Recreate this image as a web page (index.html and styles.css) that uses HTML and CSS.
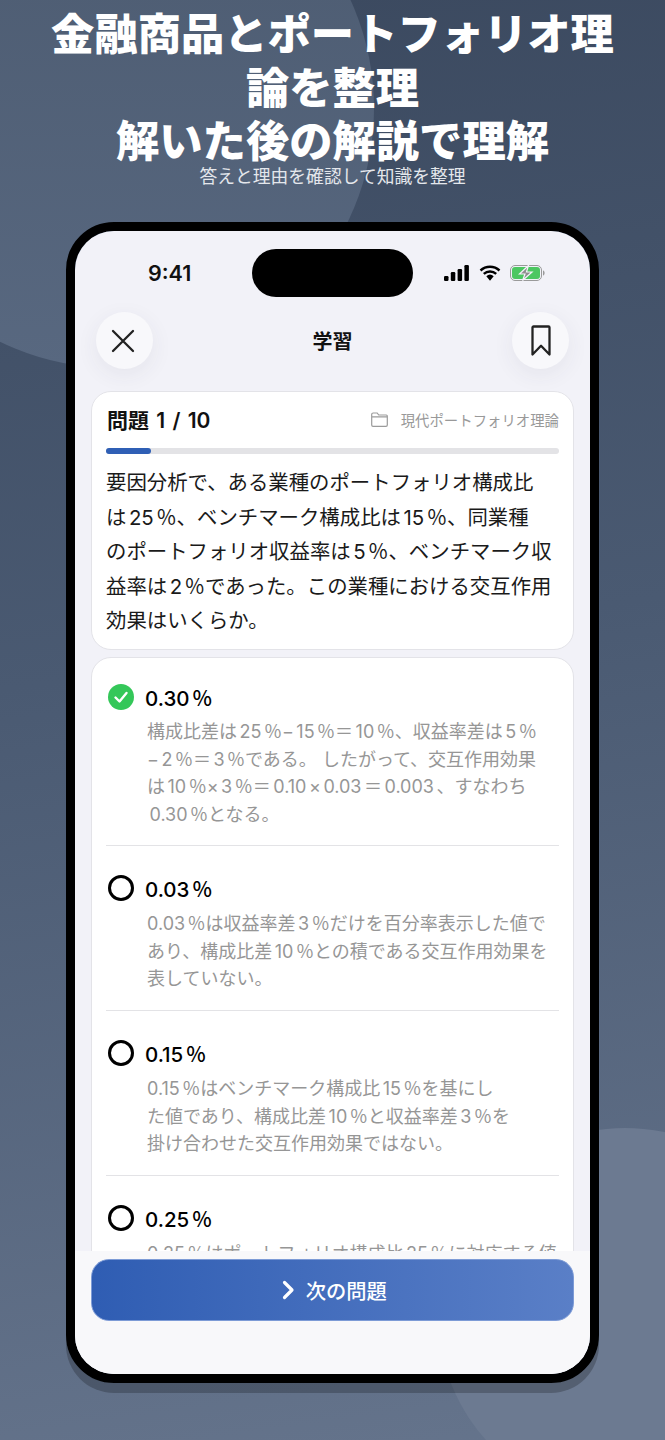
FILE: index.html
```html
<!DOCTYPE html>
<html lang="ja">
<head>
    <meta charset="UTF-8">
    <meta name="viewport" content="width=device-width, initial-scale=1.0">
    <title>学習</title>
    <link rel="stylesheet" href="styles.css">
</head>
<body>
    <div class="backdrop">
        <div class="blob blob-top"></div>
        <div class="blob blob-bottom"></div>
    </div>

    <header class="hero">
        <h1>金融商品とポートフォリオ理論を整理<br>解いた後の解説で理解</h1>
        <p>答えと理由を確認して知識を整理</p>
    </header>

    <div class="phone">
        <div class="screen">
            <div class="status-bar">
                <span class="clock">9:41</span>
                <div class="island"></div>
                <div class="status-icons">
                    <svg width="25" height="16" viewBox="0 0 25 16"><rect x="0" y="11" width="4.500" height="5" rx="1.200"/><rect x="6.800" y="7" width="4.500" height="9" rx="1.200"/><rect x="13.600" y="4" width="4.500" height="12" rx="1.200"/><rect x="20.400" y="0" width="4.500" height="16" rx="1.200"/></svg>
                    <svg width="22" height="16" viewBox="0 0 22 16"><path d="M1.500 5.500a14 14 0 0 1 19 0M4.800 8.900a9.200 9.200 0 0 1 12.400 0" fill="none" stroke="#000" stroke-width="2.400"/><path d="M7.300 11.200a5.600 5.600 0 0 1 7.400 0L11 15.800z"/></svg>
                    <svg class="battery" width="35" height="16" viewBox="0 0 35 16"><rect x="0.500" y="0.500" width="31" height="15" rx="4.500" fill="none" stroke="#9a9a9a"/><rect x="2" y="2" width="28" height="12" rx="3" fill="#4cc761"/><path d="M33 5.500c1.200.3 1.600 1.300 1.600 2.500s-.4 2.200-1.600 2.500z" fill="#9a9a9a"/><path d="M18.500 0.500L9.500 9h5.500l-2.500 6.500L22 7h-5.500z" fill="#8e8e8e" stroke="#f3f3f8" stroke-width="1.200"/></svg>
                </div>
            </div>

            <div class="nav">
                <button class="round-btn">
                    <svg class="close-icon" width="24" height="24" viewBox="0 0 24 24"><path d="M2 2l20 20M22 2L2 22" fill="none" stroke="#222" stroke-width="2.300" stroke-linecap="round"/></svg>
                </button>
                <span class="nav-title">学習</span>
                <button class="round-btn">
                    <svg width="20" height="31" viewBox="0 0 20 31"><path d="M1.500 2.500a1 1 0 0 1 1-1h15a1 1 0 0 1 1 1v27L10 20.800l-8.500 8.700z" fill="none" stroke="#222" stroke-width="2.300" stroke-linejoin="round"/></svg>
                </button>
            </div>

            <section class="card question">
                <div class="q-head">
                    <span class="q-count">問題 1 / 10</span>
                    <span class="q-topic">
                        <svg width="17" height="15" viewBox="0 0 17 15"><path d="M.7 2.500A1.500 1.500 0 0 1 2.200 1h4l1.500 2h7.600a1 1 0 0 1 1 1v9a1.300 1.300 0 0 1-1.300 1.300H2A1.300 1.300 0 0 1 .7 13zM.7 4.800h15.600" fill="none" stroke="#9b9b9b" stroke-width="1.200"/></svg>
                        現代ポートフォリオ理論
                    </span>
                </div>
                <div class="progress"><div class="progress-fill" style="width:10%"></div></div>
                <p class="q-text">要因分析で、ある業種のポートフォリオ構成比<br>は<span class="n">25</span>％、ベンチマーク構成比は<span class="n">15</span>％、同業種<br>のポートフォリオ収益率は<span class="n">5</span>％、ベンチマーク収<br>益率は<span class="n">2</span>％であった。この業種における交互作用<br>効果はいくらか。</p>
            </section>

            <section class="card answers">
                <div class="answer">
                    <div class="answer-head">
                        <svg class="mark" width="26" height="26" viewBox="0 0 26 26"><circle cx="13" cy="13" r="13" fill="#34c759"/><path d="M7.500 13.500l4 4 7-8.500" fill="none" stroke="#fff" stroke-width="2.400" stroke-linecap="round" stroke-linejoin="round"/></svg>
                        <span class="answer-label"><span class="n">0.30</span>％</span>
                    </div>
                    <p class="answer-note">構成比差は<span class="n">25</span>％−<span class="n">15</span>％＝<span class="n">10</span>％、収益率差は<span class="n">5</span>％<br>−<span class="n">2</span>％＝<span class="n">3</span>％である。 したがって、交互作用効果<br>は<span class="n">10</span>％×<span class="n">3</span>％＝<span class="n">0.10</span>×<span class="n">0.03</span>＝<span class="n">0.003</span>、すなわち<br><span class="n">0.30</span>％となる。</p>
                </div>
                <div class="answer">
                    <div class="answer-head">
                        <span class="mark ring"></span>
                        <span class="answer-label"><span class="n">0.03</span>％</span>
                    </div>
                    <p class="answer-note"><span class="n flush">0.03</span>％は収益率差<span class="n">3</span>％だけを百分率表示した値で<br>あり、構成比差<span class="n">10</span>％との積である交互作用効果を<br>表していない。</p>
                </div>
                <div class="answer">
                    <div class="answer-head">
                        <span class="mark ring"></span>
                        <span class="answer-label"><span class="n">0.15</span>％</span>
                    </div>
                    <p class="answer-note"><span class="n flush">0.15</span>％はベンチマーク構成比<span class="n">15</span>％を基にし<br>た値であり、構成比差<span class="n">10</span>％と収益率差<span class="n">3</span>％を<br>掛け合わせた交互作用効果ではない。</p>
                </div>
                <div class="answer">
                    <div class="answer-head">
                        <span class="mark ring"></span>
                        <span class="answer-label"><span class="n">0.25</span>％</span>
                    </div>
                    <p class="answer-note"><span class="n flush">0.25</span>％はポートフォリオ構成比<span class="n">25</span>％に対応する値</p>
                </div>
            </section>

            <div class="footer">
                <button class="next-btn">
                    <svg width="14" height="20" viewBox="0 0 14 20"><path d="M2.500 2.500l7.500 7.500-7.500 7.500" fill="none" stroke="#fff" stroke-width="3.200" stroke-linecap="round" stroke-linejoin="round"/></svg>
                    次の問題
                </button>
            </div>
        </div>
    </div>
</body>
</html>
```

FILE: styles.css
```css
html, body {
    margin: 0;
    padding: 0;
}
body {
    width: 665px;
    height: 1440px;
    position: relative;
    overflow: hidden;
    background: linear-gradient(172deg, #3b495f 0%, #4a5a72 45%, #65748c 100%);
    font-family: Inter, "Noto Sans CJK JP", sans-serif;
    color: #000;
}
.backdrop {
    position: absolute;
    inset: 0;
    overflow: hidden;
}
.blob {
    position: absolute;
    border-radius: 50%;
}
.blob-top {
    left: -146px;
    top: -152px;
    width: 520px;
    height: 520px;
    background: linear-gradient(180deg, #4e5d73 20%, #586880 100%);
}
.blob-bottom {
    left: 438px;
    top: 1128px;
    width: 374px;
    height: 374px;
    background: #6c7a91;
}
.hero {
    position: relative;
    box-sizing: border-box;
    height: 222px;
    padding: 5px 48px 0;
    text-align: center;
    color: #fff;
    font-family: "Noto Sans CJK JP", sans-serif;
}
.hero h1 {
    margin: 0;
    font-size: 43.300px;
    line-height: 53.500px;
    font-weight: 900;
}
.hero p {
    margin: -2px 0 0;
    font-size: 17.800px;
    line-height: 22px;
    color: #e4e7ec;
}
.phone {
    position: relative;
    width: 515px;
    height: 1143px;
    margin-left: 66px;
    border: 9px solid #000;
    border-radius: 48px;
    box-shadow: 0 10px 0 rgba(0, 0, 0, 0.22);
    overflow: hidden;
}
.screen {
    height: 100%;
    background: #f2f2f8;
    display: flex;
    flex-direction: column;
    position: relative;
}
.status-bar {
    display: flex;
    align-items: center;
    height: 48px;
    margin-top: 18px;
    padding-left: 73px;
}
.clock {
    width: 104px;
    font-size: 21.500px;
    font-weight: 600;
    color: #111;
}
.island {
    width: 161px;
    height: 48px;
    border-radius: 24px;
    background: #000;
}
.status-icons {
    display: flex;
    align-items: center;
    gap: 10px;
    margin-left: 31px;
}
.battery {
    margin-left: -1px;
}
.nav {
    display: flex;
    align-items: center;
    justify-content: space-between;
    padding: 0 21px;
    margin-top: 15px;
}
.round-btn {
    width: 57px;
    height: 57px;
    border-radius: 50%;
    border: none;
    padding: 0;
    background: #f8f8fb;
    box-shadow: 0 6px 22px rgba(60, 60, 90, 0.07);
    display: flex;
    align-items: center;
    justify-content: center;
}
.close-icon {
    margin-right: 3px;
}
.nav-title {
    font-family: "Noto Sans CJK JP", sans-serif;
    font-size: 20px;
    font-weight: 700;
    color: #111;
}
.card {
    background: #fff;
    border: 1px solid #e3e3e8;
    border-radius: 20px;
    margin: 0 16px;
    flex: none;
}
.question {
    box-sizing: border-box;
    height: 259px;
    margin-top: 22px;
    padding: 12px 14px 0;
}
.q-head {
    display: flex;
    align-items: center;
    justify-content: space-between;
    height: 30px;
    padding-left: 1px;
}
.q-count {
    font-size: 21px;
    font-weight: 600;
    word-spacing: 2px;
    color: #111;
}
.q-topic {
    display: flex;
    align-items: center;
    gap: 13px;
    font-size: 14.400px;
    color: #999;
}
.progress {
    height: 6px;
    margin-top: 14px;
    border-radius: 3px;
    background: #e3e3e6;
}
.progress-fill {
    height: 100%;
    border-radius: 3px;
    background: #2f5fb5;
}
.q-text {
    margin: 12px 0 0;
    font-size: 20.400px;
    line-height: 34.500px;
    color: #1a1a1a;
    white-space: nowrap;
}
.n {
    margin: 0 2.500px;
}
.n.flush {
    margin-left: 0;
}
.answers {
    margin-top: 7px;
    padding: 0 14px;
    height: 660px;
}
.answer {
    padding: 27px 0 17px;
    border-bottom: 1px solid #e3e3e6;
}
.answer:first-child {
    padding-top: 24px;
    padding-bottom: 16px;
}
.answer:last-child {
    border-bottom: none;
}
.answer-head {
    display: flex;
    align-items: center;
    gap: 11px;
    height: 30px;
}
.mark {
    width: 26px;
    height: 26px;
    flex: none;
    box-sizing: border-box;
    margin-left: 2px;
}
.ring {
    border: 3px solid #000;
    border-radius: 50%;
}
.answer-label {
    font-size: 20.500px;
    font-weight: 500;
}
.answer-label .n {
    margin: 0 2.500px 0 0;
}
.answer-note {
    margin: 7px 0 0 41px;
    font-size: 18px;
    line-height: 27.700px;
    color: #969696;
    white-space: nowrap;
}
.answer:first-child .answer-note {
    margin-top: 6px;
}
.footer {
    position: absolute;
    left: 0;
    right: 0;
    bottom: 0;
    height: 123px;
    padding: 8px 16px 0;
    box-sizing: border-box;
    background: #f8f8fa;
}
.next-btn {
    box-sizing: border-box;
    width: 100%;
    height: 62px;
    padding: 0 0 0 4px;
    border: 1px solid #7d9bd6;
    border-radius: 18px;
    background: linear-gradient(90deg, #2f5db3, #5a7fc7);
    color: #fff;
    font-family: "Noto Sans CJK JP", sans-serif;
    font-size: 20.300px;
    font-weight: 500;
    display: flex;
    align-items: center;
    justify-content: center;
    gap: 9.500px;
}
```
